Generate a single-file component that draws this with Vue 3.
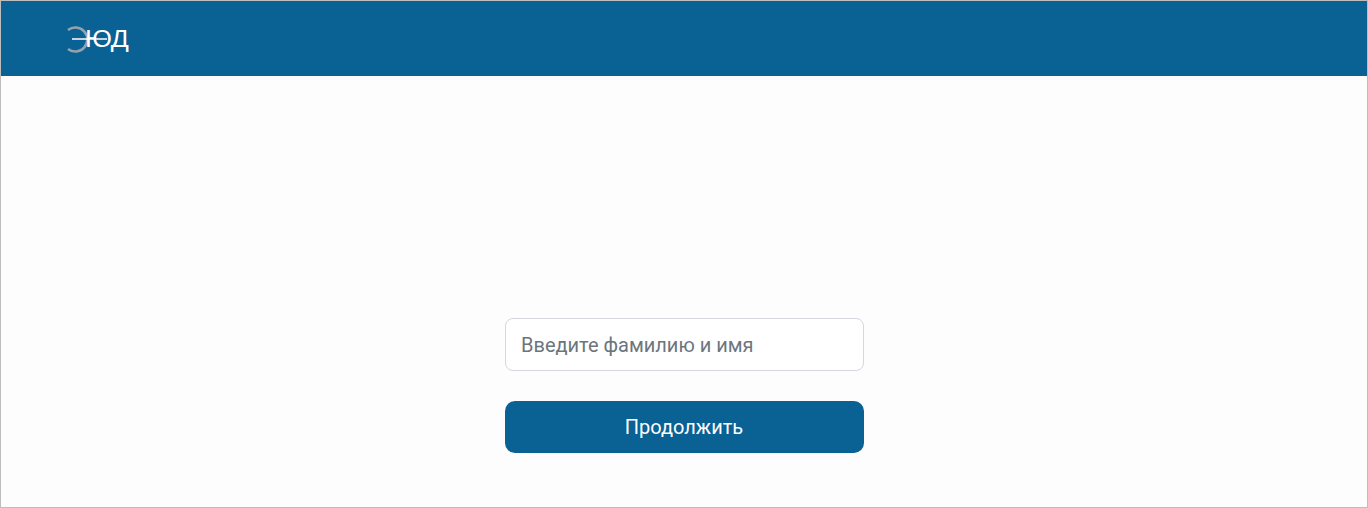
<script setup>
import { ref } from "vue";

const fullName = ref("");
</script>

<template>
  <div class="page">
    <header class="header">
      <div class="logo">
        <svg class="logo-mark" width="44" height="30" viewBox="0 0 44 30">
          <path d="M2 5 A12 12 0 1 1 2 24" fill="none" stroke="#97a3ac" stroke-width="2.6" />
          <path d="M6 14 H41" stroke="#ffffff" stroke-width="1.6" />
        </svg>
        <span class="logo-text">ЮД</span>
      </div>
    </header>
    <main class="content">
      <form class="form" @submit.prevent>
        <input v-model="fullName" class="name-input" type="text" placeholder="Введите фамилию и имя" />
        <button class="submit" type="submit">Продолжить</button>
      </form>
    </main>
  </div>
</template>

<style>
html,
body {
  margin: 0;
  background: #fdfdfd;
}
</style>

<style scoped>
.page {
  box-sizing: border-box;
  width: 1368px;
  height: 508px;
  border: 1px solid #bdbdbd;
  background: #fdfdfd;
  font-family: Roboto, "Liberation Sans", sans-serif;
}
.header {
  box-sizing: border-box;
  height: 75px;
  padding: 0 0 0 65px;
  display: flex;
  align-items: center;
  background: #096194;
}
.logo {
  position: relative;
  width: 66px;
  height: 30px;
}
.logo-mark {
  position: absolute;
  left: 0;
  top: 1px;
}
.logo-text {
  position: absolute;
  left: 19px;
  top: 1px;
  font-family: "Liberation Sans", Arial, sans-serif;
  font-size: 24px;
  line-height: 28px;
  color: #ffffff;
  transform: scaleX(1.11);
  transform-origin: left center;
}
.content {
  display: flex;
  justify-content: center;
  padding-top: 242px;
}
.form {
  width: 359px;
  display: flex;
  flex-direction: column;
  gap: 30px;
}
.name-input {
  box-sizing: border-box;
  width: 100%;
  height: 53px;
  padding: 0 15.5px;
  border: 1px solid #d5d7e0;
  border-radius: 8px;
  background: #ffffff;
  font-family: inherit;
  font-size: 20px;
  color: #333333;
  outline: none;
}
.name-input::placeholder {
  color: #6c757d;
  opacity: 1;
}
.submit {
  height: 52px;
  border: 0;
  border-radius: 10px;
  background: #096194;
  color: #ffffff;
  font-family: inherit;
  font-size: 20px;
  font-weight: 400;
  cursor: pointer;
}
</style>
